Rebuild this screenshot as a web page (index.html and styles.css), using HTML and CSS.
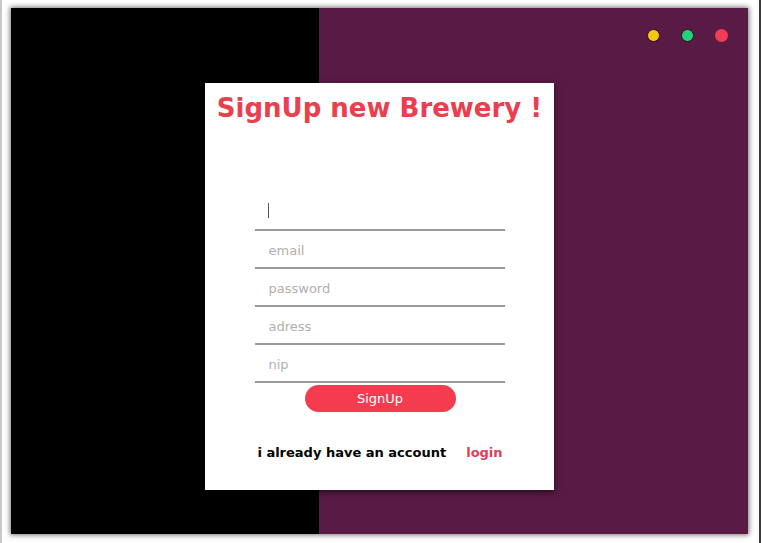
FILE: index.html
```html
<!DOCTYPE html>
<html>
<head>
<meta charset="utf-8">
<title>SignUp</title>
<link rel="stylesheet" href="styles.css">
</head>
<body>
<div class="page">
  <div class="window">
    <div class="titlebar">
      <span class="dot dot-yellow"></span>
      <span class="dot dot-green"></span>
      <span class="dot dot-red"></span>
    </div>
    <div class="card">
      <h1 class="title">SignUp new Brewery !</h1>
      <form class="form">
        <div class="field"><span class="cursor"></span></div>
        <div class="field"><span class="placeholder">email</span></div>
        <div class="field"><span class="placeholder">password</span></div>
        <div class="field"><span class="placeholder">adress</span></div>
        <div class="field"><span class="placeholder">nip</span></div>
        <div class="button">SignUp</div>
      </form>
      <div class="footer">
        <span class="have">i already have an account</span>
        <span class="login">login</span>
      </div>
    </div>
  </div>
</div>
</body>
</html>
```
FILE: styles.css
```css
html, body {
  margin: 0;
  padding: 0;
  background: #ffffff;
}
.page {
  width: 761px;
  height: 543px;
  box-sizing: border-box;
  padding: 8px 0 0 9px;
  border-left: 2px solid #c8c8c8;
  border-right: 2px solid #3a3a3a;
  font-family: "DejaVu Sans", sans-serif;
}
.window {
  width: 737px;
  height: 526px;
  background: linear-gradient(to right, #000000 308px, #591a46 308px);
  box-shadow: 0 0 5px 1px rgba(0, 0, 0, 0.55);
  display: flex;
  flex-direction: column;
  align-items: center;
}
.titlebar {
  align-self: stretch;
  display: flex;
  justify-content: flex-end;
  gap: 21px;
  padding: 21px 20px 0 0;
  height: 13px;
  box-sizing: content-box;
}
.dot {
  width: 13px;
  height: 13px;
  border-radius: 50%;
  box-sizing: border-box;
}
.dot-yellow {
  background: #f2c811;
  border: 1.5px solid #2a1020;
}
.dot-green {
  background: #22d37a;
  border: 1.5px solid #2a1020;
}
.dot-red {
  background: #f23c52;
}
.card {
  margin-top: 41px;
  width: 349px;
  height: 407px;
  background: #ffffff;
  box-shadow: 0 2px 6px rgba(0, 0, 0, 0.6);
  display: flex;
  flex-direction: column;
  align-items: center;
  box-sizing: border-box;
}
.title {
  margin: 9px 0 0 0;
  font-size: 26px;
  line-height: 32px;
  font-weight: bold;
  color: #e9404f;
  white-space: nowrap;
}
.form {
  margin-top: 69px;
  width: 250px;
  display: flex;
  flex-direction: column;
  align-items: center;
}
.field {
  width: 250px;
  height: 38px;
  border-bottom: 2px solid #9a9a9a;
  display: flex;
  align-items: center;
  padding-left: 14px;
  box-sizing: border-box;
}
.cursor {
  width: 1px;
  height: 15px;
  background: #555;
  margin-top: -2px;
  margin-left: -1px;
}
.placeholder {
  font-size: 13px;
  color: #b0b0b0;
  margin-top: 2px;
}
.button {
  margin-top: 2px;
  margin-left: 1px;
  width: 151px;
  height: 27px;
  border-radius: 14px;
  background: #f43c4e;
  color: #ffffff;
  font-size: 13px;
  line-height: 27px;
  text-align: center;
}
.footer {
  margin-top: 33px;
  display: flex;
  gap: 20px;
  font-size: 13px;
  font-weight: bold;
  margin-left: 1px;
}
.have {
  color: #000000;
}
.login {
  color: #e23c57;
}
```
